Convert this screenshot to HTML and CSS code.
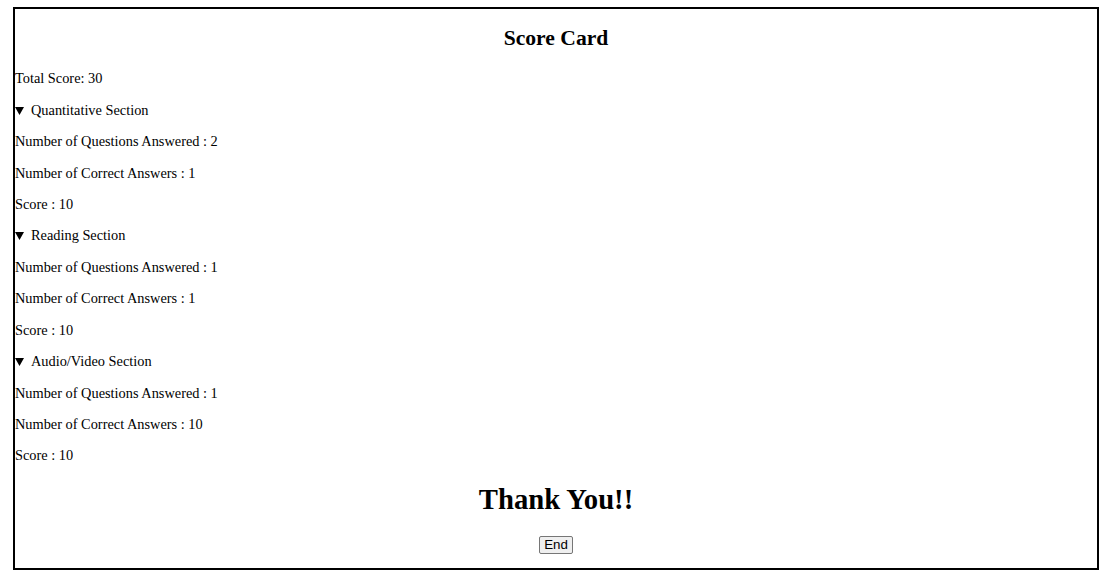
FILE: index.html
```html
<!DOCTYPE html>
<html>
<head>
<meta charset="utf-8">
<link rel="stylesheet" href="styles.css">
</head>
<body>
<div class="card">
  <h2 class="title">Score Card</h2>
  <div class="rows">
    <p class="row">Total Score: 30</p>
    <p class="row"><svg class="tri" width="9" height="8" viewBox="0 0 9 8"><path d="M0 0H9L4.5 8Z"/></svg>Quantitative Section</p>
    <p class="row">Number of Questions Answered : 2</p>
    <p class="row">Number of Correct Answers : 1</p>
    <p class="row">Score : 10</p>
    <p class="row"><svg class="tri" width="9" height="8" viewBox="0 0 9 8"><path d="M0 0H9L4.5 8Z"/></svg>Reading Section</p>
    <p class="row">Number of Questions Answered : 1</p>
    <p class="row">Number of Correct Answers : 1</p>
    <p class="row">Score : 10</p>
    <p class="row"><svg class="tri" width="9" height="8" viewBox="0 0 9 8"><path d="M0 0H9L4.5 8Z"/></svg>Audio/Video Section</p>
    <p class="row">Number of Questions Answered : 1</p>
    <p class="row">Number of Correct Answers : 10</p>
    <p class="row">Score : 10</p>
  </div>
  <h1 class="thanks">Thank You!!</h1>
  <div class="actions"><button class="end">End</button></div>
</div>
</body>
</html>
```
FILE: styles.css
```css
html, body {
  margin: 0;
  padding: 0;
  background: #fff;
}
body {
  font-family: "Liberation Serif", "Times New Roman", serif;
  font-size: 14.35px;
  color: #000;
}
.card {
  margin: 7px 15px 13px 13px;
  border: 2px solid #000;
  padding: 14px 0 14px 0;
}
.title {
  margin: 0;
  font-size: 21.6px;
  font-weight: bold;
  line-height: 30px;
  text-align: center;
}
.rows {
  margin-top: 10.3px;
}
.row {
  margin: 0;
  line-height: 31.42px;
}
.tri {
  display: inline-block;
  vertical-align: 0px;
  margin-right: 7px;
  fill: #000;
}
.thanks {
  margin: 9.5px 0 0 0;
  font-size: 28.7px;
  line-height: 36px;
  font-weight: bold;
  text-align: center;
}
.actions {
  margin-top: 19px;
  display: flex;
  justify-content: center;
}
.end {
  font-family: "Liberation Sans", Arial, sans-serif;
  font-size: 13.333px;
  line-height: 16px;
  height: 18px;
  padding: 0 4px;
  margin: 0;
  border: 1px solid #767676;
  border-radius: 2px;
  background: #efefef;
  color: #000;
}
```
